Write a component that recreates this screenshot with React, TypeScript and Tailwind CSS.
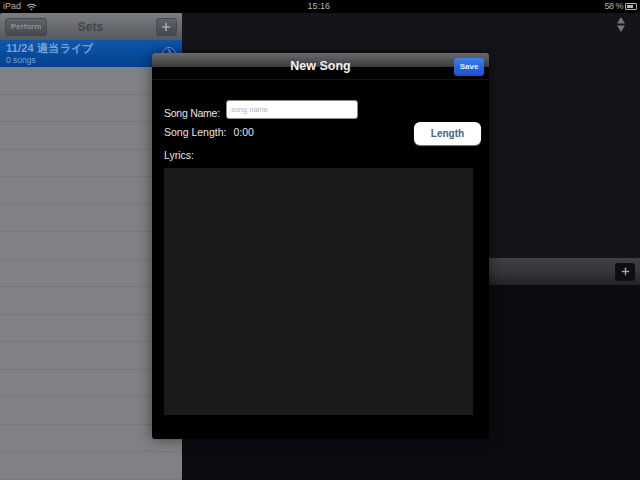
import { Plus } from 'lucide-react';

const rowKeys = Array.from({ length: 15 }, (_, i) => i);

function StatusBar() {
  return (
    <div className="flex h-[13px] shrink-0 items-center justify-between bg-black pl-[3px] pr-[3px] text-[9px] leading-none text-[#b4b4b4]">
      <div className="flex items-center gap-[5px]">
        <span>iPad</span>
        <svg width="11" height="8" viewBox="0 0 11 8" fill="none" stroke="#b4b4b4">
          <path d="M1 3 C3.5 0.6 7.5 0.6 10 3" strokeWidth="1.1" />
          <path d="M2.8 4.7 C4.3 3.4 6.7 3.4 8.2 4.7" strokeWidth="1.1" />
          <path d="M5.5 7.6 L4.3 6.2 C5 5.7 6 5.7 6.7 6.2 Z" fill="#b4b4b4" stroke="none" />
        </svg>
      </div>
      <span className="pr-[4px]">15:16</span>
      <div className="flex items-center gap-[2px]">
        <span className="tracking-[-0.5px]">58 %</span>
        <div className="flex h-[7px] w-[12px] items-stretch rounded-[1px] border border-[#b4b4b4] p-px">
          <div className="w-[6px] bg-[#b4b4b4]" />
        </div>
      </div>
    </div>
  );
}

function SetsPanel() {
  return (
    <div className="flex w-[182px] shrink-0 flex-col overflow-hidden rounded-tl-[3px] bg-[#808185]">
      {/* Toolbar */}
      <div className="flex h-[27px] shrink-0 items-center justify-between bg-gradient-to-b from-[#7c7e82] to-[#55585d] px-[5px]">
        <div className="flex h-[18px] w-[42px] items-center justify-center rounded-[3px] border border-[#45484d] bg-gradient-to-b from-[#606368] to-[#46494e] text-[8px] font-bold text-[#8c8f93]">
          Perform
        </div>
        <span className="mr-[22px] text-[12px] font-bold text-[#43464b]">Sets</span>
        <div className="flex h-[18px] w-[21px] items-center justify-center rounded-[3px] border border-[#45484d] bg-gradient-to-b from-[#5f6268] to-[#44474d]">
          <Plus className="h-[12px] w-[12px] text-[#a9abae]" strokeWidth={3} />
        </div>
      </div>
      {/* Selected row */}
      <div className="h-[27px] shrink-0 bg-gradient-to-b from-[#0f57ad] to-[#03418f] pl-[6px] pt-[2px]">
        <div className="text-[11px] font-bold leading-[13px] tracking-[0.2px] text-[#7ba2cf]">11/24 適当ライブ</div>
        <div className="text-[8.5px] leading-[10px] text-[#7ba2cf]">0 songs</div>
      </div>
      {/* Empty rows */}
      {rowKeys.map((key) => (
        <div key={key} className="h-[27.5px] shrink-0 border-b border-[#76777b]" />
      ))}
    </div>
  );
}

function DetailPanel() {
  return (
    <div className="flex flex-1 flex-col bg-[#14151a]">
      <div className="flex h-[245px] shrink-0 justify-end pr-[15px] pt-[4px]">
        <svg width="8" height="15" viewBox="0 0 8 15" fill="#75777a">
          <path d="M4 0 L8 6.5 H0 Z" />
          <path d="M0 8.5 H8 L4 15 Z" />
        </svg>
      </div>
      <div className="flex h-[27px] shrink-0 items-center justify-end bg-gradient-to-b from-[#3f4045] via-[#35363a] to-[#222327] pr-[5px]">
        <div className="flex h-[18px] w-[20px] items-center justify-center rounded-[3px] bg-[#0d0e12]">
          <Plus className="h-[11px] w-[11px] text-[#a2a3a6]" strokeWidth={3} />
        </div>
      </div>
      <div className="flex-1 bg-[#0b0c11]" />
    </div>
  );
}

function NewSongModal() {
  return (
    <div className="absolute left-[152px] top-[53px] flex h-[386px] w-[337px] flex-col overflow-hidden rounded-[3px] bg-black shadow-[0_0_14px_rgba(0,0,0,0.5)]">
      {/* Header */}
      <div className="relative h-[27px] shrink-0 border-b border-[#161616]">
        <div className="absolute inset-x-0 top-0 h-[14px] bg-gradient-to-b from-[#6b6b6b] to-[#3a3a3a]" />
        <div className="relative flex h-full items-center justify-center text-[12.5px] font-bold text-[#f2f2f2]">
          New Song
        </div>
        <div className="absolute right-[5px] top-[5px] flex h-[18px] w-[30px] items-center justify-center rounded-[3px] bg-gradient-to-b from-[#3f7df0] to-[#1c4fc9] text-[8px] font-bold text-[#e8eefc]">
          Save
        </div>
      </div>
      {/* Form */}
      <div className="flex flex-1 flex-col pl-[12px] pr-[8px] pt-[20px] text-[10.5px] text-[#e6e6e6]">
        <div className="flex h-[19px] items-center gap-[6px]">
          <span className="pt-[8px] tracking-[-0.25px]">Song Name:</span>
          <div className="flex h-[19px] w-[132px] items-center rounded-[3px] border border-[#8a8a8a] bg-white pl-[4px] text-[7.5px] text-[#b5b5b5]">
            song name
          </div>
        </div>
        <div className="mt-[3px] flex items-start justify-between">
          <div className="flex gap-[7px] pt-[3px]">
            <span>Song Length:</span>
            <span>0:00</span>
          </div>
          <div className="flex h-[23px] w-[67px] items-center justify-center rounded-[6px] bg-white text-[10px] font-bold text-[#4a6089] shadow-[0_1px_1px_rgba(160,160,160,0.8)]">
            Length
          </div>
        </div>
        <div className="mt-[3px] leading-[14px]">Lyrics:</div>
        <div className="mr-[8px] mt-[6px] h-[247px] bg-[#1b1b1b]" />
      </div>
    </div>
  );
}

export default function App() {
  return (
    <div className="relative flex h-[480px] w-[640px] flex-col overflow-hidden bg-black font-['Liberation_Sans',sans-serif]">
      <StatusBar />
      <div className="flex min-h-0 flex-1">
        <SetsPanel />
        <DetailPanel />
      </div>
      {/* Disclosure button partly hidden by the modal */}
      <div className="absolute left-[162px] top-[47px] flex h-[14px] w-[14px] items-start justify-center rounded-full border border-[#7ba2cf] bg-[#0a4a9c] pt-[1px]">
        <svg width="6" height="5" viewBox="0 0 6 5" fill="none" stroke="#7ba2cf" strokeWidth="1.2">
          <path d="M2 0 L4.5 3 L2 5" />
        </svg>
      </div>
      <NewSongModal />
    </div>
  );
}
